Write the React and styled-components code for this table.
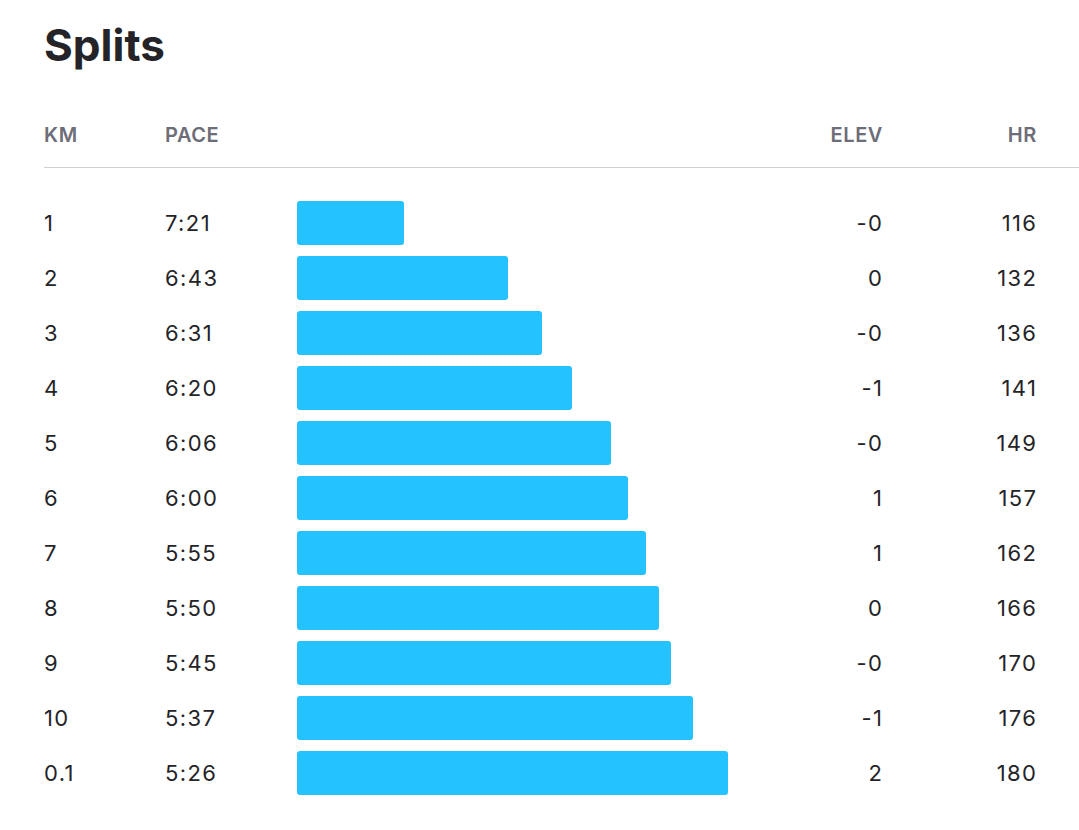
import React from 'react'
import styled, { createGlobalStyle } from 'styled-components'

const splits = [
  { km: '1', pace: '7:21', bar: 107, elev: '-0', hr: 116 },
  { km: '2', pace: '6:43', bar: 211, elev: '0', hr: 132 },
  { km: '3', pace: '6:31', bar: 245, elev: '-0', hr: 136 },
  { km: '4', pace: '6:20', bar: 275, elev: '-1', hr: 141 },
  { km: '5', pace: '6:06', bar: 314, elev: '-0', hr: 149 },
  { km: '6', pace: '6:00', bar: 331, elev: '1', hr: 157 },
  { km: '7', pace: '5:55', bar: 349, elev: '1', hr: 162 },
  { km: '8', pace: '5:50', bar: 362, elev: '0', hr: 166 },
  { km: '9', pace: '5:45', bar: 374, elev: '-0', hr: 170 },
  { km: '10', pace: '5:37', bar: 396, elev: '-1', hr: 176 },
  { km: '0.1', pace: '5:26', bar: 431, elev: '2', hr: 180 },
]

const GlobalStyle = createGlobalStyle`
  body {
    margin: 0;
    background: #fff;
    font-family: Inter, "Noto Sans", sans-serif;
    color: #242428;
  }
`

const Splits = () => {
  return (
    <Page>
      <GlobalStyle />
      <Title>Splits</Title>
      <HeaderRow>
        <HeadCell>KM</HeadCell>
        <HeadCell>PACE</HeadCell>
        <HeadCell />
        <HeadCell right>ELEV</HeadCell>
        <HeadCell right>HR</HeadCell>
      </HeaderRow>
      <Body>
        {splits.map(s => (
          <Row key={s.km}>
            <Cell>{s.km}</Cell>
            <Cell>{s.pace}</Cell>
            <BarCell><Bar style={{ width: s.bar }} /></BarCell>
            <Cell right>{s.elev}</Cell>
            <Cell right>{s.hr}</Cell>
          </Row>
        ))}
      </Body>
    </Page>
  )
}

const Page = styled.div`
  padding: 13px 0 0 44px;
`

const Title = styled.h2`
  margin: 0 0 40px;
  font-size: 44px;
  font-weight: 700;
  line-height: 64px;
  color: #242428;
`

const columns = '121px 132px 1fr 122px 154px'

const HeaderRow = styled.div`
  box-sizing: border-box;
  display: grid;
  grid-template-columns: ${columns};
  padding: 0 43px 14px 0;
  height: 51px;
  align-items: center;
  border-bottom: 1px solid #cfcfd4;
`

const HeadCell = styled.div`
  font-size: 20px;
  font-weight: 600;
  letter-spacing: 0.6px;
  color: #6d6d78;
  text-align: ${props => props.right ? 'right' : 'left'};
  margin-right: ${props => props.right ? '-1px' : '0'};
`

const Body = styled.div`
  display: flex;
  flex-direction: column;
  gap: 11px;
  padding: 33px 43px 0 0;
`

const Row = styled.div`
  display: grid;
  grid-template-columns: ${columns};
  height: 44px;
  align-items: center;
`

const Cell = styled.div`
  font-size: 22px;
  font-weight: 400;
  letter-spacing: 1.4px;
  color: #242428;
  text-align: ${props => props.right ? 'right' : 'left'};
  margin-right: ${props => props.right ? '-1.4px' : '0'};
`

const BarCell = styled.div`
  display: flex;
  align-items: center;
  height: 100%;
`

const Bar = styled.div`
  height: 44px;
  background: #24c3ff;
  border-radius: 3px;
`

export default Splits
